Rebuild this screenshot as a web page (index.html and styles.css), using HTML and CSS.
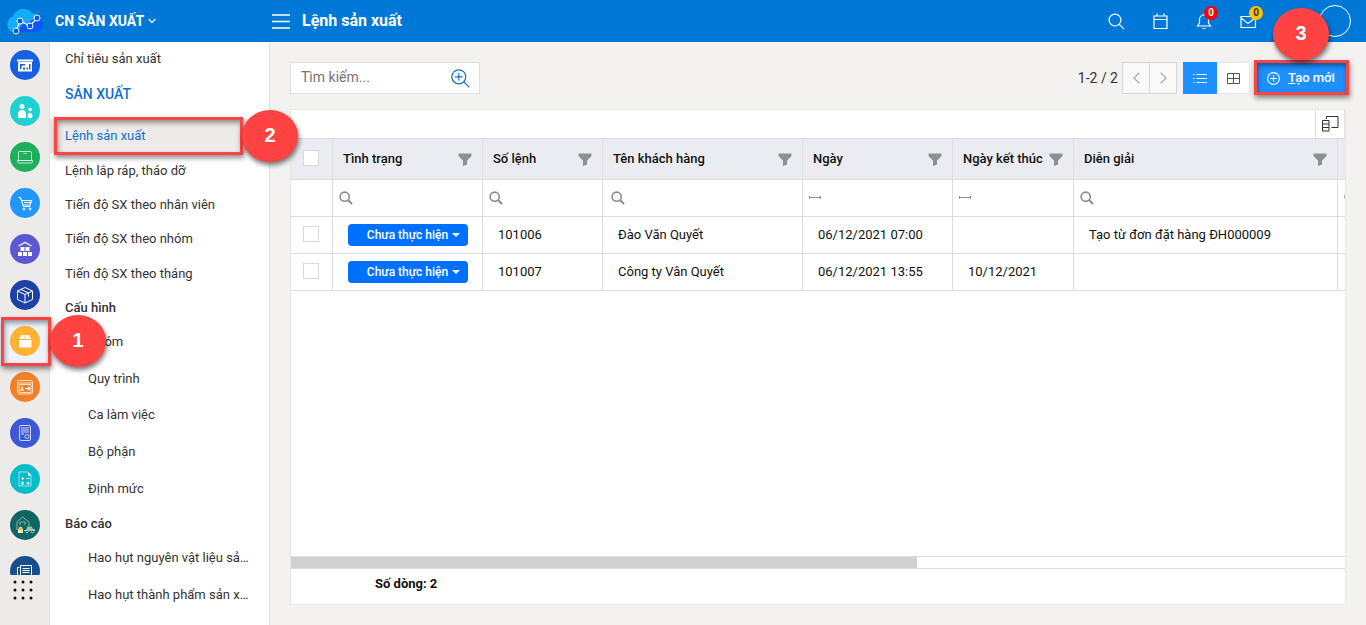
FILE: index.html
```html
<!DOCTYPE html>
<html lang="vi">
<head>
<meta charset="utf-8">
<meta name="viewport" content="width=device-width, initial-scale=1">
<title>Lệnh sản xuất</title>
<link rel="stylesheet" href="styles.css">
</head>
<body>
<svg class="defs" aria-hidden="true">
  <symbol id="funnel" viewBox="0 0 14 13"><path d="M0.500 0.500h13v2.500L9 7.500V11.500L5 13V7.500L0.500 3z" fill="#8f8f8f"/></symbol>
  <symbol id="lens" viewBox="0 0 14 14"><circle cx="5.700" cy="5.700" r="4.600" fill="none" stroke="#8b8b8b" stroke-width="1.600"/><path d="M9 9l4 4" stroke="#8b8b8b" stroke-width="2"/></symbol>
  <symbol id="range" viewBox="0 0 12 5"><path d="M.5 0v3M11.500 0v3M0 1.500h12" stroke="#8f8f8f" fill="none"/></symbol>
</svg>

<header class="topbar">
  <div class="brand">
    <svg class="logo" viewBox="0 0 40 30" aria-hidden="true">
      <path d="M9 26a8 8 0 0 1-1-15.500A11 11 0 0 1 27 7a9 9 0 0 1 7 7L24 26z" fill="#12aefb"/>
      <path d="M14 26c0-7 5-10 10-8 2-8 14-6 14 1 0 4-3 7-7 7z" fill="#0a58f5"/>
      <path d="M11 25L15 15 25 20 32 12" fill="none" stroke="#fff" stroke-width="1.200"/>
      <g fill="#0a58f5" stroke="#fff"><circle cx="11" cy="25" r="3"/><circle cx="15" cy="15" r="3"/><circle cx="25" cy="20" r="3"/><circle cx="32" cy="12" r="3"/></g>
    </svg>
    <button class="company" type="button">CN SẢN XUẤT
      <svg width="8" height="6" viewBox="0 0 8 6" aria-hidden="true"><path d="M.7 1L4 4.300 7.300 1" fill="none" stroke="#fff" stroke-width="1.200"/></svg>
    </button>
  </div>
  <button class="burger" type="button" aria-label="Menu">
    <svg width="18" height="15" viewBox="0 0 18 15"><path d="M0 1h18M0 7.500h18M0 14h18" stroke="#fff" stroke-width="1.400"/></svg>
  </button>
  <h1 class="title">Lệnh sản xuất</h1>
  <nav class="tools">
    <button type="button" aria-label="Tìm"><svg width="17" height="17" viewBox="0 0 17 17"><circle cx="7" cy="7" r="5.900"/><path d="M11.300 11.300L16 16"/></svg></button>
    <button type="button" aria-label="Lịch"><svg width="17" height="17" viewBox="0 0 17 17"><path d="M2 3h13v12.500H2zM2 6.500h13M5 .5V3M12 .5V3"/></svg></button>
    <button type="button" aria-label="Thông báo"><svg width="17" height="17" viewBox="0 0 17 17"><path d="M1.500 13h13l-2-3V6.500a4.500 4.500 0 0 0-9 0V10zM6.500 15.500h3M8 2V.5"/></svg><span class="badge red">0</span></button>
    <button type="button" aria-label="Thư"><svg width="17" height="17" viewBox="0 0 17 17"><path d="M1 3.500h14.500v11H1zM1 5l7 5.500L15.500 5"/></svg><span class="badge yellow">0</span></button>
    <button class="avatar" type="button" aria-label="Tài khoản"></button>
  </nav>
</header>

<div class="shell">
  <aside class="rail">
    <ul class="apps">
      <li><a class="app blue" href="#" aria-label="Tổng quan"><svg viewBox="0 0 30 30"><path d="M7 10.500h16" stroke-width="2"/><path class="solid" fill-rule="evenodd" d="M8 12h14v9.500H8zM10 14v5h1.500v-2.500l1-1H15V14zM16.500 17.500v2H18v-2zM19 14v5.500h1.500V14zM13 17.500v2h2v-2z"/></svg></a></li>
      <li><a class="app teal" href="#" aria-label="Nhân sự"><svg class="solid" viewBox="0 0 30 30"><circle cx="12" cy="10.500" r="2.500"/><circle cx="20" cy="13.500" r="1.800"/><path d="M8 22v-4a4 4 0 0 1 8 0v4zM17.500 20c0-4.500 5-4.500 5 0 0 3-5 3-5 0z"/></svg></a></li>
      <li><a class="app green soft" href="#" aria-label="Máy tính"><svg viewBox="0 0 30 30"><rect x="8.500" y="9.500" width="13" height="9" rx="1"/><path d="M7.500 18.500h15v1a1.500 1.500 0 0 1-1.500 1.500H9a1.500 1.500 0 0 1-1.500-1.500zM13.500 11.500h3"/></svg></a></li>
      <li><a class="app sky" href="#" aria-label="Bán hàng"><svg viewBox="0 0 30 30"><path d="M8.500 9.500h2l3 9h7M12 12.500h9.500L20 17h-6.500M14 14.500h7" stroke-width="1.200"/><circle cx="14" cy="21" r="1"/><circle cx="20" cy="21" r="1"/></svg></a></li>
      <li><a class="app violet" href="#" aria-label="Kho"><svg viewBox="0 0 30 30"><path d="M8.500 12l6.500-3.500 6.500 3.500" stroke-width="1.200"/><path class="solid" d="M10.500 13h4v4h-4zM15.500 13h4v4h-4zM8 18h4v4H8zM13 18h4v4h-4zM18 18h4v4h-4z"/></svg></a></li>
      <li><a class="app navy" href="#" aria-label="Sản phẩm"><svg viewBox="0 0 30 30"><path d="M15 7.500l7.500 3.500v8.500L15 23l-7.500-3.500V11zM7.500 11l7.500 3.500 7.500-3.500M15 14.500V23M11 9.500l7.500 3.500v3.500"/></svg></a></li>
      <li class="active"><a class="app amber" href="#" aria-label="Sản xuất"><svg class="solid" viewBox="0 0 30 30"><path d="M11 9h3.600v4H9zM15.400 9H19l2 4h-5.600zM9 14h12.500v6.500a1 1 0 0 1-1 1h-10.500a1 1 0 0 1-1-1z"/></svg></a></li>
      <li><a class="app orange soft" href="#" aria-label="Nhân công"><svg viewBox="0 0 30 30"><rect x="7.500" y="8.500" width="15" height="13.500" rx="1.500"/><path d="M8 11h14M10 12.500h-1v8h12v-8H10"/><path d="M10.500 19l1.500-2.500 1.500 2.500M12 14v2M15.500 16.500h4M18 15l1.500 1.500L18 18" stroke="#fff" stroke-width="1.200"/></svg></a></li>
      <li><a class="app indigo soft" href="#" aria-label="Chứng từ"><svg viewBox="0 0 30 30"><rect x="9.500" y="7.500" width="11" height="15" rx="1.500"/><path d="M11 10h8M11 12h8M11 14h8M11 16h3"/><circle cx="17" cy="18.500" r="2"/></svg></a></li>
      <li><a class="app cyan" href="#" aria-label="Kế toán"><svg viewBox="0 0 30 30"><path d="M9 8h9l3 3v11H9z" opacity=".6"/><path class="solid" d="M18 8v3.500h3.500z"/><path d="M11 14.500h3M12.500 13v3M16.500 14.500h3M11.200 18l2.500 2.500M13.700 18l-2.500 2.500M16.500 19.300h3M18 17.800v3" stroke-width="1.200"/></svg></a></li>
      <li><a class="app pine" href="#" aria-label="Tài sản"><svg viewBox="0 0 30 30"><path d="M7 20v-8l5.500-5 6.500 5v4M10 15v-3h5v3" opacity=".5"/><path d="M14 20h2l1.500-3.500h4L23 19h2v2h-11z" fill="#9dbfb9" stroke="none"/><circle cx="17" cy="21.500" r="1.300" stroke="#9dbfb9"/><circle cx="22.500" cy="21.500" r="1.300" stroke="#9dbfb9"/><rect x="8" y="19" width="5" height="4" fill="#dfe8e4" stroke="none"/><circle cx="10.500" cy="18.500" r="2" fill="#ffc107" stroke="none"/></svg></a></li>
      <li><a class="app steel" href="#" aria-label="Báo cáo"><svg viewBox="0 0 30 30"><path d="M10.500 9.500h11V22h-14V11.500h2M10.500 9.500V22"/><path d="M12.500 12.500h7M12.500 14.500h7M12.500 16.500h7" stroke-width="1.200"/></svg></a></li>
    </ul>
    <button class="more" type="button" aria-label="Tất cả ứng dụng"><svg width="20" height="20" viewBox="0 0 20 20"><g fill="#111"><circle cx="2" cy="2" r="1.500"/><circle cx="10" cy="2" r="1.500"/><circle cx="18" cy="2" r="1.500"/><circle cx="2" cy="10" r="1.500"/><circle cx="10" cy="10" r="1.500"/><circle cx="18" cy="10" r="1.500"/><circle cx="2" cy="18" r="1.500"/><circle cx="10" cy="18" r="1.500"/><circle cx="18" cy="18" r="1.500"/></g></svg></button>
  </aside>

  <nav class="menu">
    <a class="first" href="#">Chỉ tiêu sản xuất</a>
    <h2 class="section">SẢN XUẤT</h2>
    <ul class="list main-list">
      <li class="current"><a href="#">Lệnh sản xuất</a></li>
      <li><a href="#">Lệnh lắp ráp, tháo dỡ</a></li>
      <li><a href="#">Tiến độ SX theo nhân viên</a></li>
      <li><a href="#">Tiến độ SX theo nhóm</a></li>
      <li><a href="#">Tiến độ SX theo tháng</a></li>
    </ul>
    <h3 class="group">Cấu hình</h3>
    <ul class="list sub config-list">
      <li><a href="#">Nhóm</a></li>
      <li><a href="#">Quy trình</a></li>
      <li><a href="#">Ca làm việc</a></li>
      <li><a href="#">Bộ phận</a></li>
      <li><a href="#">Định mức</a></li>
    </ul>
    <h3 class="group">Báo cáo</h3>
    <ul class="list sub report-list">
      <li><a href="#">Hao hụt nguyên vật liệu sả…</a></li>
      <li><a href="#">Hao hụt thành phẩm sản x…</a></li>
    </ul>
  </nav>

  <main class="content">
    <div class="actions">
      <form class="search">
        <input type="text" placeholder="Tìm kiếm..." aria-label="Tìm kiếm">
        <button type="button" aria-label="Tìm nâng cao"><svg width="19" height="19" viewBox="0 0 19 19"><circle cx="7.800" cy="7.800" r="7" /><path d="M13 13l5.300 5.300M7.800 4v7.600M4 7.800h7.600"/></svg></button>
      </form>
      <span class="count">1-2 / 2</span>
      <div class="pager">
        <button type="button" aria-label="Trang trước"><svg width="7" height="12" viewBox="0 0 7 12"><path d="M6.300.8L1 6l5.300 5.200"/></svg></button>
        <button type="button" aria-label="Trang sau"><svg width="7" height="12" viewBox="0 0 7 12"><path d="M.7.800L6 6 .7 11.200"/></svg></button>
      </div>
      <div class="views">
        <button class="on" type="button" aria-label="Danh sách"><svg width="14" height="11" viewBox="0 0 14 11"><path d="M3.500 1.500H14M3.500 5.500H14M3.500 9.500H14M0 1.500h1.500M0 5.500h1.500M0 9.500h1.500" stroke="#fff"/></svg></button>
        <button type="button" aria-label="Lưới"><svg width="13" height="11" viewBox="0 0 13 11"><path d="M.5.500h12v10H.5zM6.500.500v10M.5 5.500h12" stroke="#555" fill="none"/></svg></button>
      </div>
      <button class="create" type="button"><svg width="13" height="13" viewBox="0 0 13 13" aria-hidden="true"><circle cx="6.500" cy="6.500" r="5.900"/><path d="M6.500 3.200v6.600M3.200 6.500h6.600"/></svg><span><u>T</u>ạo mới</span></button>
    </div>

    <section class="card">
      <div class="card-tools">
        <button type="button" aria-label="Chọn cột"><svg width="17" height="16" viewBox="0 0 17 16"><path d="M4.500 3V.5h11.500v11H9.500M.5 4.500h6.500v10.500H.5zM.5 8h6.500M.5 11.500h6.500" stroke="#333" fill="none"/></svg></button>
      </div>
      <div class="grid-view">
        <table class="grid">
          <colgroup><col class="w-check"><col class="w-150"><col class="w-120"><col class="w-200"><col class="w-150"><col class="w-date"><col class="w-note"><col class="w-120"></colgroup>
          <thead>
            <tr>
              <th class="tick"><input type="checkbox" aria-label="Chọn tất cả"></th>
              <th><div class="head"><span>Tình trạng</span><svg><use href="#funnel"/></svg></div></th>
              <th><div class="head"><span>Số lệnh</span><svg><use href="#funnel"/></svg></div></th>
              <th><div class="head"><span>Tên khách hàng</span><svg><use href="#funnel"/></svg></div></th>
              <th><div class="head"><span>Ngày</span><svg><use href="#funnel"/></svg></div></th>
              <th><div class="head"><span>Ngày kết thúc</span><svg><use href="#funnel"/></svg></div></th>
              <th><div class="head"><span>Diễn giải</span><svg><use href="#funnel"/></svg></div></th>
              <th></th>
            </tr>
            <tr class="filters">
              <td></td>
              <td><svg class="lens"><use href="#lens"/></svg></td>
              <td><svg class="lens"><use href="#lens"/></svg></td>
              <td class="wide"><svg class="lens"><use href="#lens"/></svg></td>
              <td><svg class="range"><use href="#range"/></svg></td>
              <td><svg class="range"><use href="#range"/></svg></td>
              <td><svg class="lens"><use href="#lens"/></svg></td>
              <td><svg class="lens"><use href="#lens"/></svg></td>
            </tr>
          </thead>
          <tbody>
            <tr>
              <td class="tick"><input type="checkbox" aria-label="Chọn 101006"></td>
              <td><button class="status" type="button">Chưa thực hiện</button></td>
              <td>101006</td><td>Đào Văn Quyết</td><td>06/12/2021 07:00</td><td></td><td>Tạo từ đơn đặt hàng ĐH000009</td><td></td>
            </tr>
            <tr>
              <td class="tick"><input type="checkbox" aria-label="Chọn 101007"></td>
              <td><button class="status" type="button">Chưa thực hiện</button></td>
              <td>101007</td><td>Công ty Vân Quyết</td><td>06/12/2021 13:55</td><td>10/12/2021</td><td></td><td></td>
            </tr>
          </tbody>
        </table>
      </div>
      <div class="scroll"><div class="thumb"></div></div>
      <div class="summary">Số dòng: 2</div>
    </section>
  </main>
</div>

<div class="mark-box box-1"></div><div class="mark-dot dot-1">1</div>
<div class="mark-box box-2"></div><div class="mark-dot dot-2">2</div>
<div class="mark-box box-3"></div><div class="mark-dot dot-3">3</div>
</body>
</html>
```
FILE: styles.css
```css
* { box-sizing: border-box; }
body {
  margin: 0;
  height: 100vh;
  display: flex;
  flex-direction: column;
  overflow: hidden;
  position: relative;
  font: 13px/16px Roboto, "Liberation Sans", sans-serif;
  color: #222;
  background: #f3f2f0;
}
button { font: inherit; color: inherit; padding: 0; border: 0; background: none; display: flex; align-items: center; justify-content: center; }
a { color: inherit; text-decoration: none; }
ul { list-style: none; margin: 0; padding: 0; }
h1, h2, h3 { margin: 0; font-weight: 500; }
svg { flex: none; display: block; }
.defs { position: absolute; width: 0; height: 0; }

/* top bar */
.topbar { flex: none; height: 42px; display: flex; align-items: center; background: #0078d7; color: #fff; }
.brand { width: 272px; display: flex; align-items: center; }
.logo { width: 40px; height: 30px; margin: 0 10px 0 5px; }
.company { gap: 4px; font-size: 14px; font-weight: 700; }
.title { margin-left: 12px; font-size: 16px; line-height: 20px; font-weight: 700; }
.tools { margin-left: auto; padding-right: 15px; display: flex; align-items: center; }
.tools button { width: 44px; height: 42px; position: relative; }
.tools svg { fill: none; stroke: #fff; stroke-width: 1.2; }
.tools .avatar { width: 32px; height: 32px; margin-left: 49px; border: 1px solid #fff; border-radius: 50%; }
.badge { position: absolute; left: 22px; top: 6px; width: 14px; height: 14px; border-radius: 50%; font-size: 10px; line-height: 14px; font-weight: 700; }
.red { background: #f00; }
.yellow { background: #ffc107; color: #333; left: 23px; }

/* application rail */
.shell { flex: 1; min-height: 0; display: flex; }
.rail { width: 50px; flex: none; display: flex; flex-direction: column; background: #edebe9; border-right: 1px solid #e0dfde; }
.apps { flex: 1; min-height: 0; overflow: hidden; }
.apps li { height: 46px; padding: 8px 0 0 10px; }
.apps .active { background: #edf2fc; }
.app { display: block; width: 30px; height: 30px; border-radius: 50%; }
.app svg { width: 30px; height: 30px; fill: none; stroke: #fff; }
.app .solid { fill: #fff; stroke: none; }
.soft svg { stroke: rgba(255, 255, 255, .75); }
.blue { background: #1660e0; }
.teal { background: #1fd1d1; }
.green { background: #1daf5c; }
.sky { background: #2196fb; }
.violet { background: #5b58d2; }
.navy { background: #1d41a6; }
.amber { background: #ffb335; }
.orange { background: #f38024; }
.indigo { background: #3c58d6; }
.cyan { background: #07bccb; }
.pine { background: #0e6562; }
.steel { background: #164f8c; }
.more { width: 46px; height: 50px; padding-bottom: 20px; }

/* section menu */
.menu { width: 220px; flex: none; overflow: hidden; background: #fff; border-right: 1px solid #e1dfdd; color: #333; }
.first { display: block; padding: 9px 15px; }
.section { height: 43px; padding: 10px 15px; font-size: 14px; color: #1170cf; }
.list { display: grid; grid-auto-rows: 1fr; }
.list li { display: flex; align-items: center; padding: 0 20px 0 15px; min-width: 0; }
.list a { white-space: nowrap; }
.list .current { background: #edebe9; color: #1170cf; }
.list.sub li { padding-left: 38px; }
.main-list { height: 172px; }
.config-list { height: 183px; }
.report-list { height: 73px; }
.group { font-size: 13px; line-height: 16px; padding: 9px 15px 8px; }

/* content */
.content { flex: 1; min-width: 0; display: flex; flex-direction: column; padding: 20px; }
.actions { flex: none; display: flex; align-items: center; font-size: 14px; margin-bottom: 15px; }
.search { width: 190px; height: 32px; margin-right: auto; display: flex; align-items: center; padding: 0 9px 0 10px; background: #fff; border: 1px solid #e1dfdd; }
.search input { flex: 1; min-width: 0; border: 0; padding: 0 0 2px; outline: 0; font: inherit; background: none; }
.search input::placeholder { color: #757575; }
.search svg { fill: none; stroke: #1170cf; stroke-width: 1.2; }
.count { margin-right: 4px; color: #333; }
.pager { display: flex; margin-right: 6px; }
.pager button { width: 28px; height: 32px; border: 1px solid #d6d6d6; background: #f9f9f9; }
.pager button + button { border-left: 0; width: 27px; }
.pager svg { fill: none; stroke: #aaa; stroke-width: 1.2; }
.views { display: flex; margin-right: 6px; }
.views button { width: 33px; height: 32px; background: #fff; border: 1px solid #e6e6e6; border-left: 0; }
.views .on { width: 34px; background: #1e90ff; border: 0; }
.create { height: 32px; width: 90px; gap: 8px; font-size: 13px; font-weight: 500; color: #fff; background: #1e90ff; }
.create svg { fill: none; stroke: #fff; stroke-width: 1.1; }

.card { flex: 1; min-height: 0; display: flex; flex-direction: column; background: #fff; border: 1px solid #e8e7e6; }
.card-tools { flex: none; height: 28px; display: flex; justify-content: flex-end; }
.card-tools button { width: 30px; height: 28px; border-left: 1px solid #ddd; border-right: 1px solid #e6e6e6; }
.grid-view { flex: 1; min-height: 0; overflow: hidden; border-top: 1px solid #ddd; }
.grid { width: 1167px; table-layout: fixed; border-collapse: separate; border-spacing: 0; color: #111; }
.w-check { width: 42px; }
.w-120 { width: 120px; }
.w-150 { width: 150px; }
.w-200 { width: 200px; }
.w-date { width: 121px; }
.w-note { width: 264px; }
.grid th, .grid td { height: 37px; padding: 0 14px 0 15px; text-align: left; border: solid #dcdee2; border-width: 0 1px 1px 0; white-space: nowrap; }
.grid th { height: 41px; padding: 0 10px; background: #ebecf1; font-weight: 500; }
.head { display: flex; justify-content: space-between; align-items: center; }
.head svg { width: 14px; height: 13px; }
.grid .filters td { padding: 0 6px; }
.grid .filters .wide { padding-left: 8px; }
.lens { width: 14px; height: 14px; }
.range { width: 12px; height: 5px; }
.grid .tick { padding: 0 0 2px 12px; }
.tick input { appearance: none; display: block; width: 16px; height: 16px; margin: 0; border: 1px solid #d9d9d9; background: #fff; }
.status { width: 120px; height: 22px; padding-left: 11px; gap: 4px; border-radius: 4px; background: #0071ff; color: #fff; font-size: 12px; font-weight: 500; }
.status::after { content: ""; border: 4px solid transparent; border-top-color: #fff; border-bottom: 0; }
.scroll { flex: none; height: 13px; border: solid #ddd; border-width: 1px 0; }
.thumb { width: 59.4%; height: 11px; background: #d0d0d0; }
.summary { flex: none; height: 35px; padding: 7px 84px; font-weight: 700; color: #111; }

/* walkthrough markers, floating over the page */
.mark-box { position: absolute; border: 3px solid #fb4444; box-shadow: 1px 3px 5px rgba(0, 0, 0, .45), inset 1px 3px 5px rgba(0, 0, 0, .4); }
.mark-dot { position: absolute; width: 56px; height: 52px; border-radius: 50%; background: #ff4343; box-shadow: 1px 3px 5px rgba(0, 0, 0, .55); color: #fff; font: 700 20px/50px "Liberation Sans", sans-serif; text-align: center; }
.box-1 { left: 1px; top: 317px; width: 50px; height: 49px; }
.dot-1 { left: 50px; top: 315px; }
.box-2 { left: 54px; top: 117px; width: 189px; height: 38px; }
.dot-2 { left: 242px; top: 110px; }
.box-3 { right: 17px; top: 60px; width: 95px; height: 35px; }
.dot-3 { right: 37px; top: 8px; }
```
